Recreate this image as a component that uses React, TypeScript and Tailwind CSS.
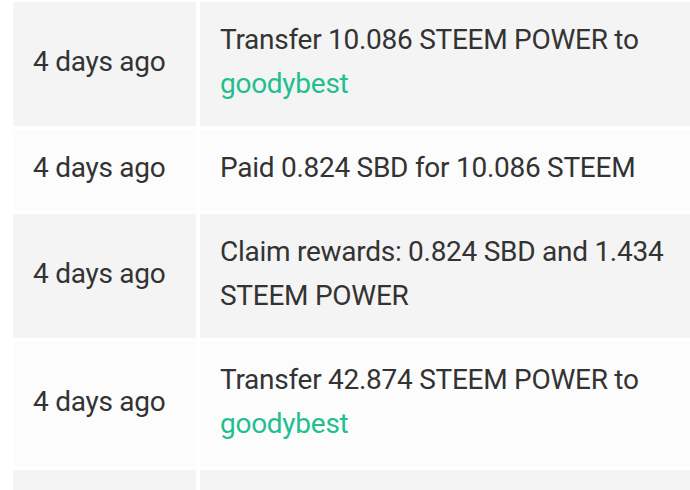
import React from "react";

type Row = { time: string; text: string; link?: string };

const rows: Row[] = [
  { time: "4 days ago", text: "Transfer 10.086 STEEM POWER to", link: "goodybest" },
  { time: "4 days ago", text: "Paid 0.824 SBD for 10.086 STEEM" },
  { time: "4 days ago", text: "Claim rewards: 0.824 SBD and 1.434 STEEM POWER" },
  { time: "4 days ago", text: "Transfer 42.874 STEEM POWER to", link: "goodybest" },
];

export default function App() {
  return (
    <div
      className="w-[690px] h-[490px] overflow-hidden bg-white text-[#333333] text-[28px] leading-[44px] tracking-[-0.27px]"
      style={{ fontFamily: "Roboto, 'Noto Sans', sans-serif" }}
    >
      <div className="flex flex-col gap-1 pt-[2px] pl-[13px]">
        {rows.map((r, i) => {
          const bg = i % 2 === 0 ? "bg-[#f4f4f4]" : "bg-[#fcfcfc]";
          return (
            <div key={i} className="flex gap-1">
              <div className={`w-[183px] shrink-0 flex items-center px-5 pt-4 pb-5 ${bg}`}>
                <span>{r.time}</span>
              </div>
              <div className={`w-[490px] shrink-0 pl-5 pr-3 pt-4 pb-5 ${bg}`}>
                <span>{r.text}</span>
                {r.link && (
                  <>
                    <br />
                    <span className="text-[#1fbf8f]">{r.link}</span>
                  </>
                )}
              </div>
            </div>
          );
        })}
        <div className="flex gap-1">
          <div className="w-[183px] h-[60px] shrink-0 bg-[#f4f4f4]" />
          <div className="w-[490px] h-[60px] shrink-0 bg-[#f4f4f4]" />
        </div>
      </div>
    </div>
  );
}
